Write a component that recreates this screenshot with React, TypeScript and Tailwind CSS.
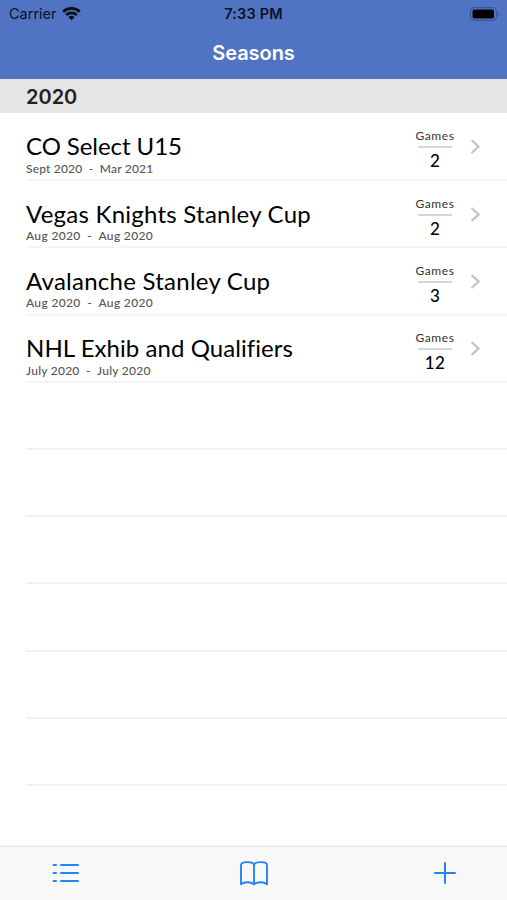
interface Season {
  name: string
  dates: string
  games: number
  nameClass: string
  datesClass: string
}

const seasons: Season[] = [
  { name: "CO Select U15", dates: "Sept 2020  -  Mar 2021", games: 2, nameClass: "-tracking-[0.06px]", datesClass: "tracking-[0.18px]" },
  { name: "Vegas Knights Stanley Cup", dates: "Aug 2020  -  Aug 2020", games: 2, nameClass: "tracking-[0.24px]", datesClass: "tracking-[0.34px]" },
  { name: "Avalanche Stanley Cup", dates: "Aug 2020  -  Aug 2020", games: 3, nameClass: "tracking-[0.25px]", datesClass: "tracking-[0.34px]" },
  { name: "NHL Exhib and Qualifiers", dates: "July 2020  -  July 2020", games: 12, nameClass: "tracking-[0.06px]", datesClass: "tracking-[0.25px]" },
]

const emptyRows = [1, 2, 3, 4, 5, 6]

function StatusBar() {
  return (
    <div className="grid h-[27px] grid-cols-3 items-center pl-[9px] pr-[7px] text-[#0b1220]">
      <div className="flex items-center gap-[5px]">
        <span className="pt-[2px] text-[14.5px] leading-none">Carrier</span>
        <svg width="19" height="14" viewBox="0 0 19 14" fill="none" stroke="#080d18" strokeWidth="2.7">
          <path d="M1.2 4.7a12 12 0 0 1 16.6 0" />
          <path d="M4.2 8a7.7 7.7 0 0 1 10.6 0" />
          <path d="M9.5 13.2 6.5 10.3a4.3 4.3 0 0 1 6 0Z" fill="#080d18" stroke="none" />
        </svg>
      </div>
      <span className="pr-[2px] pt-[2px] text-center text-[14.5px] font-semibold leading-none tracking-[0.15px]">7:33 PM</span>
      <svg className="justify-self-end" width="31" height="14" viewBox="0 0 31 14">
        <rect x="1.5" y="0.7" width="26" height="12.6" rx="4" fill="none" stroke="#3d5690" strokeWidth="1.2" />
        <rect x="3.5" y="2.6" width="21.5" height="8.8" rx="2" fill="#000" />
        <path d="M28.9 5v4c1.8-.6 1.8-3.4 0-4Z" fill="#3d5690" />
      </svg>
    </div>
  )
}

function SeasonRow({ season }: { season: Season }) {
  return (
    <li className="flex h-[67.2px] pl-[26px]">
      <div className="flex flex-1 border-b-2 border-[#f5f5f5]">
        <div className="flex-1 pt-[17.4px] font-['Lato','Liberation_Sans',sans-serif]">
          <h2 className={`whitespace-nowrap text-[24px] leading-[29px] text-black ${season.nameClass}`}>{season.name}</h2>
          <p className={`whitespace-pre pt-[0.6px] text-[12px] font-medium leading-[15px] text-[#555] ${season.datesClass}`}>{season.dates}</p>
        </div>
        <div className="flex w-[42px] flex-col items-center pt-[14.4px] font-['Lato','Liberation_Sans',sans-serif]">
          <span className="text-[12px] leading-4 tracking-[0.6px] text-[#333]">Games</span>
          <span className="mt-[2px] h-[2px] w-[34px] bg-[#d6d6d6]" />
          <span className="mt-[3px] text-[17px] font-medium leading-5 tracking-[0.3px] text-black">{season.games}</span>
        </div>
        <svg className="ml-[14px] mr-[26px] mt-[25.4px]" width="11" height="15" viewBox="0 0 11 15" fill="none" stroke="#c2c2c4" strokeWidth="2.2">
          <path d="M1.5 1 8.5 7.5 1.5 14" />
        </svg>
      </div>
    </li>
  )
}

export default function App() {
  return (
    <div className="flex h-[900px] w-[507px] flex-col overflow-hidden bg-white font-['Inter','Liberation_Sans',sans-serif]">
      <header className="h-[79px] bg-[#5074c3]">
        <StatusBar />
        <h1 className="flex h-[51px] items-center justify-center text-[20px] font-semibold tracking-[-0.05px] text-white">Seasons</h1>
      </header>
      <main className="flex-1">
        <div className="flex h-[34px] items-center bg-[#e5e5e5] pl-[26px] pt-[2px] text-[20px] font-semibold text-[#222]">
          2020
        </div>
        <ul className="pt-px">
          {seasons.map((season) => (
            <SeasonRow key={season.name} season={season} />
          ))}
          {emptyRows.map((row) => (
            <li key={row} className="ml-[26px] h-[67.2px] border-b-2 border-[#f1f1f1]" />
          ))}
        </ul>
      </main>
      <footer className="flex h-[55px] items-center justify-between border-t-2 border-[#ececec] bg-[#f8f8f8] pb-px pl-[52px] pr-[51px]">
        <svg width="28" height="20" viewBox="0 0 28 20" fill="none" stroke="#2483f5" strokeWidth="2" strokeLinecap="round">
          <path d="M1.5 2H4M1.5 10H4M1.5 18H4M9 2h17M9 10h17M9 18h17" />
        </svg>
        <svg className="mr-[6px]" width="28" height="26" viewBox="0 0 28 26" fill="none" stroke="#2483f5" strokeWidth="1.9" strokeLinejoin="round">
          <path d="M14 4.8C13 1.2 1 1.2 1 5.3v19c3-2.7 10-2.7 13 0V4.8ZM14 4.8c1-3.6 13-3.6 13 .5v19c-3-2.7-10-2.7-13 0" />
        </svg>
        <svg width="22" height="22" viewBox="0 0 22 22" fill="none" stroke="#2483f5" strokeWidth="2" strokeLinecap="round">
          <path d="M11 1v20M1 11h20" />
        </svg>
      </footer>
    </div>
  )
}
